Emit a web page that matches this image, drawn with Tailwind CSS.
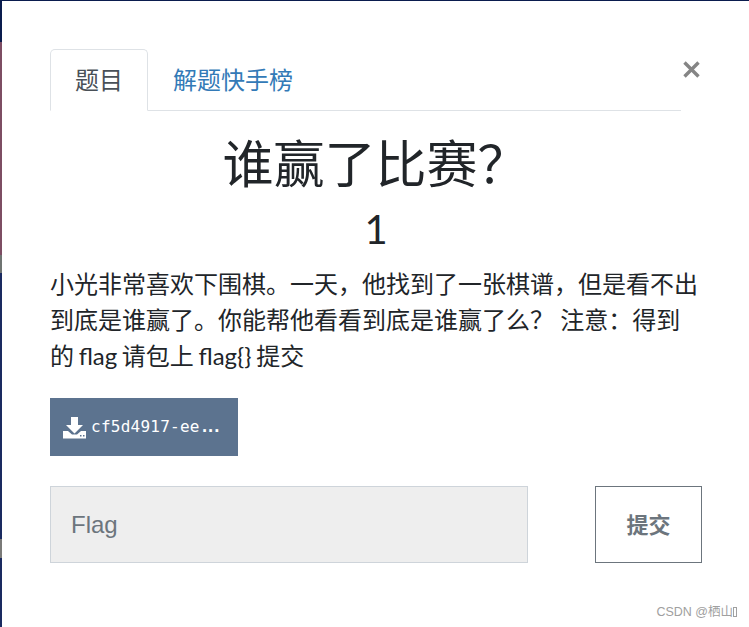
<!DOCTYPE html>
<html lang="zh">
<head>
<meta charset="utf-8">
<script src="https://cdn.jsdelivr.net/npm/@tailwindcss/browser@4"></script>
</head>
<body class="flex w-[749px] h-[627px] overflow-hidden bg-white font-['Lato','Noto_Sans_CJK_SC',sans-serif] text-[#212529]">
<div class="w-[2px] h-[627px] flex flex-col shrink-0">
  <div class="h-[42px] bg-[#0a1c4e]"></div>
  <div class="h-[213px] bg-[#7d4d63]"></div>
  <div class="h-[18px] bg-[#6f7472]"></div>
  <div class="h-[266px] bg-[#1a2a60]"></div>
  <div class="h-[19px] bg-[#7a7a78]"></div>
  <div class="flex-1 bg-[#1a2a60]"></div>
</div>
<div class="relative flex-1 h-[627px]">
  <div class="h-[1px] bg-[#0a1c4e]"></div>
  <div class="px-[48px] pt-[48px]">
  <button class="absolute left-[677px] top-[57px] w-[24px] h-[24px] flex items-center justify-center">
    <svg width="17" height="17" viewBox="0 0 17 17"><path d="M1.500 1.500L15.500 15.500M15.500 1.500L1.500 15.500" stroke="#858585" stroke-width="3.400"/></svg>
  </button>
  <div class="w-[631px] h-[62px] flex border-b border-[#dee2e6]">
    <div class="w-[98px] h-[62px] border border-[#dee2e6] border-b-white rounded-t-[5px] bg-white flex items-center justify-center text-[24px] text-[#495057]">题目</div>
    <div class="pl-[25px] h-[62px] flex items-center text-[24px] text-[#337ab7]">解题快手榜</div>
  </div>
  <h1 class="w-[651px] mt-[20px] h-[65px] text-center text-[51px] leading-[65px] font-normal whitespace-nowrap">谁赢了比赛&#xff1f;</h1>
  <div class="w-[652px] text-center text-[40px] leading-[48px] mt-[9px]">1</div>
  <p class="w-[652px] mt-[13px] text-[24px] leading-[36px]">小光非常喜欢下围棋。一天&#xff0c;他找到了一张棋谱&#xff0c;但是看不出到底是谁赢了。你能帮他看看到底是谁赢了么&#xff1f; 注意&#xff1a;得到<span class="[word-spacing:-1.500px]">的 flag 请包上 flag{} 提交</span></p>
  <div class="mt-[24px] w-[188px] h-[58px] bg-[#5c738f] flex items-center pl-[13px] text-white">
    <svg width="23" height="23" viewBox="0 0 23 23" class="shrink-0"><path d="M8 1h7v8h5l-8.500 8.500L3 9h5z" fill="#fff"/><path d="M0 15h5l4 3.500h5l4-3.500h5v7.500H0z" fill="#fff"/><rect x="17" y="19" width="1.500" height="1.500" fill="#5c738f"/><rect x="20" y="19" width="1.500" height="1.500" fill="#5c738f"/></svg>
    <span class="ml-[5px] font-['DejaVu_Sans_Mono',monospace] text-[16px] tracking-[0.25px] whitespace-nowrap">cf5d4917-ee<span class="font-bold tracking-[-3.500px]">...</span></span>
  </div>
  <div class="mt-[30px] flex justify-between w-[652px]">
    <div class="w-[478px] h-[77px] bg-[#eeeeee] border border-[#ced4da] flex items-center pl-[20px] text-[24px] text-[#6c757d] font-['Liberation_Sans',sans-serif]">Flag</div>
    <button class="w-[107px] h-[77px] border border-[#6c757d] bg-white text-[#6c757d] text-[22px] font-bold">提交</button>
  </div>
  </div>
  <div class="absolute right-[13px] bottom-[7px] flex items-center text-[12.500px] leading-[16px] text-[#a0a0a0] font-['Liberation_Sans','Noto_Sans_CJK_SC',sans-serif]">CSDN @栖山<span class="w-[4px] h-[10px] border border-[#a0a0a0]"></span></div>
</div>
</body>
</html>
